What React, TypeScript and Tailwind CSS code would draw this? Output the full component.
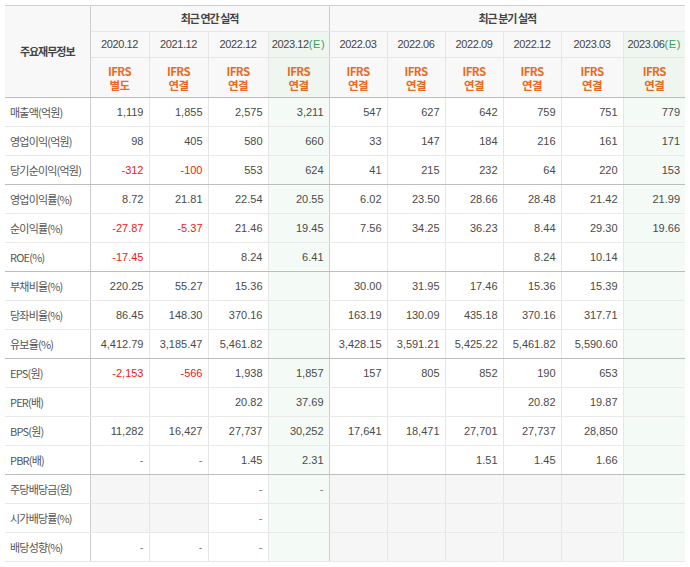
import React from 'react';

type Cell = string | null;

const dates = ['2020.12', '2021.12', '2022.12', '2023.12', '2022.03', '2022.06', '2022.09', '2022.12', '2023.03', '2023.06'];
const basis = ['별도', '연결', '연결', '연결', '연결', '연결', '연결', '연결', '연결', '연결'];

// null = grey (no data) cell
const rows: { label: string; v: Cell[]; sep?: boolean }[] = [
  { label: '매출액(억원)', v: ['1,119', '1,855', '2,575', '3,211', '547', '627', '642', '759', '751', '779'] },
  { label: '영업이익(억원)', v: ['98', '405', '580', '660', '33', '147', '184', '216', '161', '171'] },
  { label: '당기순이익(억원)', v: ['-312', '-100', '553', '624', '41', '215', '232', '64', '220', '153'], sep: true },
  { label: '영업이익률(%)', v: ['8.72', '21.81', '22.54', '20.55', '6.02', '23.50', '28.66', '28.48', '21.42', '21.99'] },
  { label: '순이익률(%)', v: ['-27.87', '-5.37', '21.46', '19.45', '7.56', '34.25', '36.23', '8.44', '29.30', '19.66'] },
  { label: 'ROE(%)', v: ['-17.45', '', '8.24', '6.41', '', '', '', '8.24', '10.14', ''], sep: true },
  { label: '부채비율(%)', v: ['220.25', '55.27', '15.36', '', '30.00', '31.95', '17.46', '15.36', '15.39', ''] },
  { label: '당좌비율(%)', v: ['86.45', '148.30', '370.16', '', '163.19', '130.09', '435.18', '370.16', '317.71', ''] },
  { label: '유보율(%)', v: ['4,412.79', '3,185.47', '5,461.82', '', '3,428.15', '3,591.21', '5,425.22', '5,461.82', '5,590.60', ''], sep: true },
  { label: 'EPS(원)', v: ['-2,153', '-566', '1,938', '1,857', '157', '805', '852', '190', '653', ''] },
  { label: 'PER(배)', v: ['', '', '20.82', '37.69', '', '', '', '20.82', '19.87', ''] },
  { label: 'BPS(원)', v: ['11,282', '16,427', '27,737', '30,252', '17,641', '18,471', '27,701', '27,737', '28,850', ''] },
  { label: 'PBR(배)', v: ['-', '-', '1.45', '2.31', '', '', '1.51', '1.45', '1.66', ''], sep: true },
  { label: '주당배당금(원)', v: [null, null, '-', '-', null, null, null, null, null, ''] },
  { label: '시가배당률(%)', v: [null, null, '-', '', null, null, null, null, null, ''] },
  { label: '배당성향(%)', v: ['-', '-', '-', '', null, null, null, null, null, ''] },
];

const cols = ['w-[85px]', 'w-[59px]', 'w-[59px]', 'w-[60px]', 'w-[61px]', 'w-[58px]', 'w-[58px]', 'w-[58px]', 'w-[58px]', 'w-[62px]', 'w-[62px]'];
const isEst = (i: number) => i === 3 || i === 9;
const KR = "font-['Noto_Sans_CJK_KR','Noto_Sans',sans-serif]";
const NUM = "font-['Liberation_Sans',Arial,sans-serif]";

const sideBorder = (i: number) =>
  i === 9 ? '' : i === 3 ? 'border-r border-r-[#cdcdcd]' : 'border-r border-r-[#e6e6e6]';

export default function App() {
  return (
    <div className="bg-white p-[5px]">
      <table className="w-[680px] table-fixed border-collapse border-t border-b border-t-[#cfcfcf] border-b-[#bdbdbd]">
        <colgroup>
          {cols.map((c, i) => <col key={i} className={c} />)}
        </colgroup>
        <thead>
          <tr className="h-[26px]">
            <th rowSpan={3} className={`${KR} bg-[#f8f8f8] border-r border-r-[#cdcdcd] border-b border-b-[#bdbdbd] text-[11px] font-bold tracking-[-1px] text-[#444] text-center`}>
              주요재무정보
            </th>
            <th colSpan={4} className={`${KR} bg-[#f8f8f8] border-r border-r-[#cdcdcd] border-b border-b-[#e6e6e6] text-[11px] font-bold tracking-[-1px] text-[#444]`}>
              최근 연간 실적
            </th>
            <th colSpan={6} className={`${KR} bg-[#f8f8f8] border-b border-b-[#e6e6e6] text-[11px] font-bold tracking-[-1px] text-[#444]`}>
              최근 분기 실적
            </th>
          </tr>
          <tr className="h-[26px]">
            {dates.map((d, i) => (
              <th
                key={i}
                className={`${NUM} ${isEst(i) ? 'bg-[#eff6f0]' : 'bg-[#f8f8f8]'} ${sideBorder(i)} border-b border-b-[#e6e6e6] text-[11px] font-normal tracking-[-0.4px] text-[#444] text-center whitespace-nowrap`}
              >
                {d}
                {isEst(i) && <span className="text-[#3f9a57] tracking-[0.6px]">(E)</span>}
              </th>
            ))}
          </tr>
          <tr className="h-[40px]">
            {basis.map((b, i) => (
              <th
                key={i}
                className={`${KR} ${isEst(i) ? 'bg-[#eff6f0]' : 'bg-[#f8f8f8]'} ${sideBorder(i)} border-b border-b-[#bdbdbd] text-[11.5px] font-bold leading-[14px] tracking-[-0.6px] text-[#ea6a1f] text-center`}
              >
                IFRS
                <br />
                {b}
              </th>
            ))}
          </tr>
        </thead>
        <tbody>
          {rows.map((r) => (
            <tr key={r.label} className="h-[29px]">
              <td
                className={`${KR} border-r border-r-[#cdcdcd] border-b ${r.sep ? 'border-b-[#bdbdbd]' : 'border-b-[#e9e9e9]'} pl-[5px] text-[11px] tracking-[-0.8px] text-[#555] whitespace-nowrap`}
              >
                {r.label}
              </td>
              {r.v.map((v, i) => {
                const bg = v === null ? 'bg-[#f6f6f6]' : isEst(i) ? 'bg-[#f4faf5]' : 'bg-white';
                const color = v && v.startsWith('-') && v.length > 1 ? 'text-[#f01818]' : v === '-' ? 'text-[#777]' : 'text-[#4a4a4a]';
                return (
                  <td
                    key={i}
                    className={`${NUM} ${bg} ${sideBorder(i)} border-b ${r.sep ? 'border-b-[#bdbdbd]' : 'border-b-[#e9e9e9]'} pr-[5px] text-right text-[11px] ${color} whitespace-nowrap`}
                  >
                    {v}
                  </td>
                );
              })}
            </tr>
          ))}
        </tbody>
      </table>
    </div>
  );
}
